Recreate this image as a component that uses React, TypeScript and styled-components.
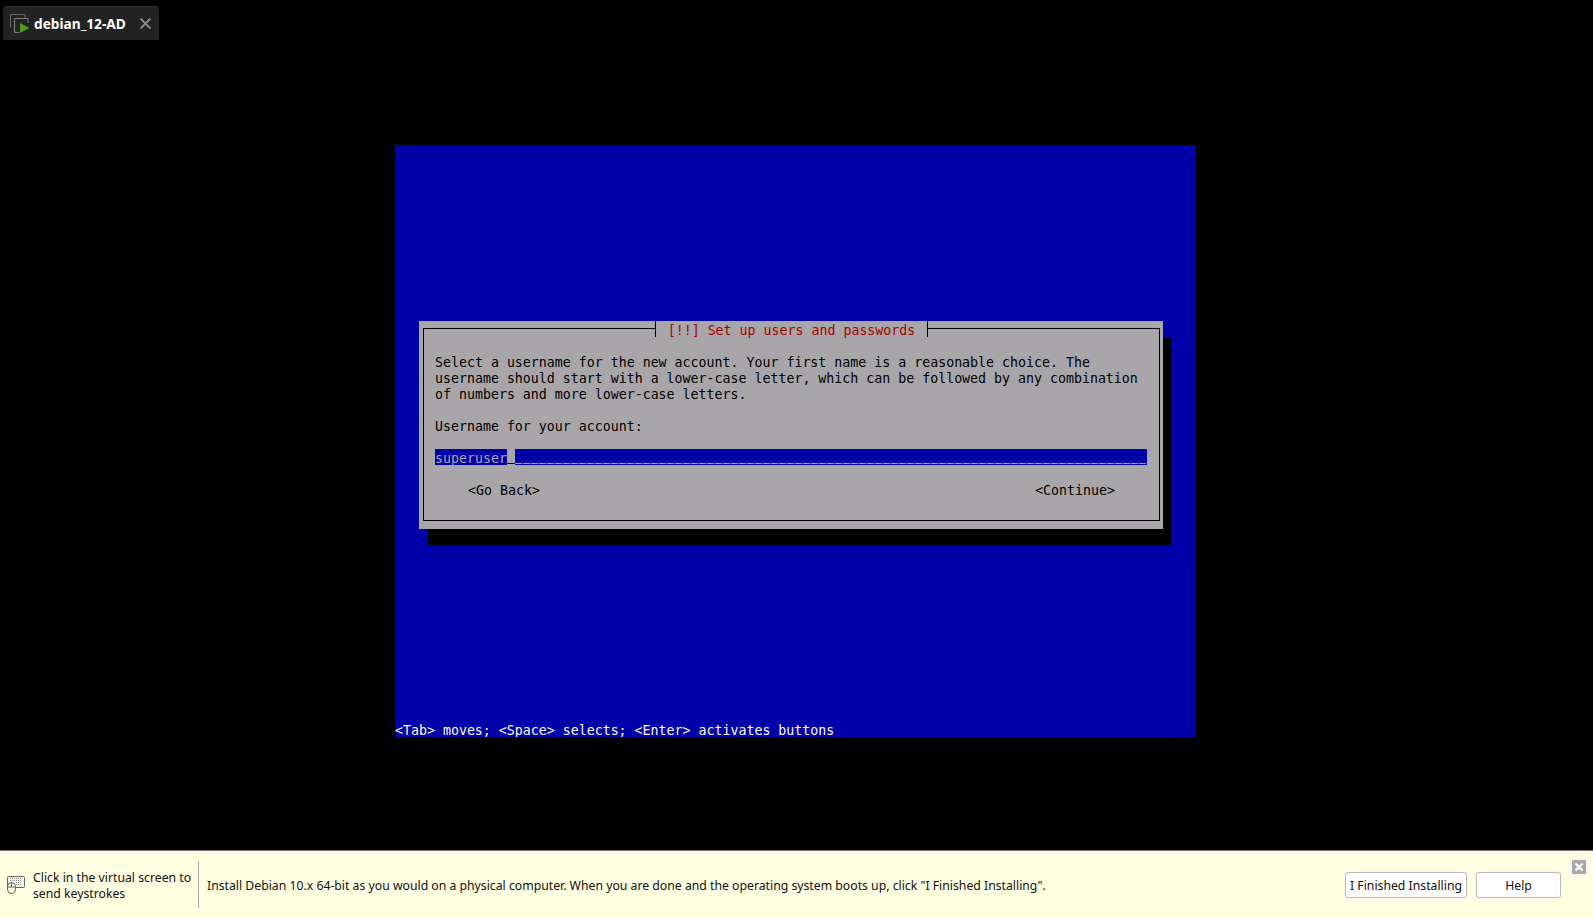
import React from "react";
import styled, { createGlobalStyle } from "styled-components";

const Global = createGlobalStyle`
  html, body { margin: 0; padding: 0; height: 100%; background: #000; overflow: hidden; }
  #root { height: 100%; }
`;

const Page = styled.div`
  width: 1593px;
  height: 918px;
  display: flex;
  flex-direction: column;
  background: #000;
`;

const TabBar = styled.div`
  height: 40px;
  padding: 6px 0 0 3px;
  box-sizing: border-box;
  display: flex;
`;

const Tab = styled.div`
  width: 156px;
  height: 34px;
  box-sizing: border-box;
  background: #222;
  border-radius: 4px 4px 0 0;
  border-top: 1px solid #333;
  display: flex;
  align-items: center;
  padding: 0 0 0 7px;
`;

const TabTitle = styled.span`
  font: bold 13.7px "Noto Sans", "Liberation Sans", Arial, sans-serif;
  color: #fff;
  margin-left: 4px;
  width: 105px;
  white-space: nowrap;
`;

const VmArea = styled.div`
  flex: 1;
  display: flex;
  justify-content: center;
  padding: 105px 3px 0 0;
`;

const Screen = styled.div`
  width: 800px;
  height: 592px;
  background: #0000a8;
  color: #fff;
  font: 13.28px/16px "DejaVu Sans Mono", monospace;
  display: flex;
  flex-direction: column;
  white-space: pre;
  padding-top: 176px;
  box-sizing: border-box;
`;

const Dialog = styled.div`
  position: relative;
  width: 744px;
  height: 208px;
  margin-left: 24px;
  box-sizing: border-box;
  background: #a8a6a8;
  color: #000;
  box-shadow: 8px 16px 0 #000;
  padding: 7px 3px 8px 4px;
`;

const Frame = styled.div`
  height: 100%;
  box-sizing: border-box;
  border: 1px solid #000;
  padding: 26px 11px 0 11px;
  display: flex;
  flex-direction: column;
`;

const DialogTitle = styled.div`
  position: absolute;
  top: 0;
  left: 236px;
  width: 273px;
  height: 16px;
  line-height: 20px;
  box-sizing: border-box;
  background: #a8a6a8;
  border-left: 1px solid #000;
  border-right: 1px solid #000;
  color: #a80000;
  text-align: center;
`;

const Paragraph = styled.div`
  margin-bottom: 16px;
`;

const InputRow = styled.div`
  height: 16px;
  width: 712px;
  display: flex;
  margin: 14px 0 18px;
  line-height: 20px;
`;

const Selected = styled.span`
  background: #0000a8;
  color: #a8a6a8;
  width: 72px;
  height: 16px;
  flex: none;
`;

const Cursor = styled.span`
  width: 8px;
  height: 16px;
  flex: none;
  background: linear-gradient(#000060, #000060) 0 14px / 8px 1px no-repeat;
`;

const Fill = styled.span`
  flex: 1;
  height: 16px;
  background: #0000a8 linear-gradient(90deg, #a8a6a8 7px, transparent 7px) 0 14px / 8px 1px repeat-x;
`;

const Buttons = styled.div`
  display: flex;
  justify-content: space-between;
  padding: 0 33px 0 33px;
`;

const Hint = styled.div`
  margin-top: auto;
  height: 16px;
  line-height: 20px;
  overflow: hidden;
`;

const InfoBar = styled.div`
  height: 68px;
  box-sizing: border-box;
  flex: none;
  background: #ffffe1;
  border-top: 1px solid #777;
  display: flex;
  align-items: center;
  position: relative;
  font: 12.24px "Noto Sans", "Liberation Sans", Arial, sans-serif;
  color: #111;
`;

const KeyHint = styled.div`
  display: flex;
  align-items: center;
  width: 198px;
  padding-left: 7px;
  box-sizing: border-box;
  line-height: 16px;
  gap: 8px;
  flex: none;
`;

const KeyText = styled.span`
  padding-top: 2px;
  white-space: nowrap;
`;

const Divider = styled.div`
  width: 1px;
  height: 47px;
  background: #aaa;
  flex: none;
`;

const Message = styled.div`
  margin-left: 8px;
  padding-top: 2px;
  flex: 1;
`;

const ActionButton = styled.button<{ $w: number }>`
  width: ${(p) => p.$w}px;
  height: 26px;
  box-sizing: border-box;
  padding: 2px 0 0;
  background: #fff;
  border: 1px solid #bbb;
  border-radius: 3px;
  box-shadow: 0 0 0 1px #f8f8ee;
  font: 12.24px "Noto Sans", "Liberation Sans", Arial, sans-serif;
  color: #111;
  margin-right: 9px;
  flex: none;
`;

const Actions = styled.div`
  display: flex;
  padding-right: 23px;
`;

const CloseBox = styled.div`
  position: absolute;
  top: 9px;
  right: 7px;
  width: 14px;
  height: 14px;
  background: #a8a8a8;
  border-radius: 1px;
  box-shadow: 0 0 0 2px #f6f6f0;
  display: flex;
  align-items: center;
  justify-content: center;
`;

const VmIcon = () => (
  <svg width="20" height="19" viewBox="0 0 20 19" style={{ flex: "none" }}>
    <path d="M.5 13.5V.5H15V4" fill="none" stroke="#6a6a6a" />
    <path d="M4.5 18.5V4.5H18V9" fill="none" stroke="#7a7a7a" strokeWidth="1.2" />
    <path d="M4.5 18.5H9" fill="none" stroke="#7a7a7a" strokeWidth="1.2" />
    <path d="M10 9L19.5 14L10 19Z" fill="#4f9a17" />
  </svg>
);

const KeyboardIcon = () => (
  <svg width="18" height="19" viewBox="0 0 18 19" style={{ flex: "none" }}>
    <rect x="0.5" y="1.5" width="17" height="11" rx="1" fill="#f4f4ec" stroke="#5c6660" />
    <path d="M3 3.5h12M3 5.5h12M9 7.5h6M9 9.5h6" stroke="#8a8f88" strokeDasharray="1 1" />
    <rect x="0.5" y="7.5" width="8" height="11" rx="4" fill="#ffffe1" stroke="#5c6660" />
    <path d="M4.5 8v4M1 12h7" stroke="#5c6660" />
  </svg>
);

export default function App() {
  return (
    <Page>
      <Global />
      <TabBar>
        <Tab>
          <VmIcon />
          <TabTitle>debian_12-AD</TabTitle>
          <svg width="13" height="13" viewBox="0 0 13 13" style={{ flex: "none" }}>
            <path d="M1.5 1.5L11.5 11.5M11.5 1.5L1.5 11.5" stroke="#888" strokeWidth="1.8" />
          </svg>
        </Tab>
      </TabBar>
      <VmArea>
        <Screen>
          <Dialog>
            <DialogTitle>[!!] Set up users and passwords</DialogTitle>
            <Frame>
              <Paragraph>
                {"Select a username for the new account. Your first name is a reasonable choice. The\nusername should start with a lower-case letter, which can be followed by any combination\nof numbers and more lower-case letters."}
              </Paragraph>
              <div>Username for your account:</div>
              <InputRow>
                <Selected>superuser</Selected>
                <Cursor />
                <Fill />
              </InputRow>
              <Buttons>
                <span>{"<Go Back>"}</span>
                <span>{"<Continue>"}</span>
              </Buttons>
            </Frame>
          </Dialog>
          <Hint>{"<Tab> moves; <Space> selects; <Enter> activates buttons"}</Hint>
        </Screen>
      </VmArea>
      <InfoBar>
        <KeyHint>
          <KeyboardIcon />
          <KeyText>
            Click in the virtual screen to
            <br />
            send keystrokes
          </KeyText>
        </KeyHint>
        <Divider />
        <Message>
          Install Debian 10.x 64-bit as you would on a physical computer. When you are done and the operating system boots up, click "I Finished Installing".
        </Message>
        <Actions>
          <ActionButton $w={122}>I Finished Installing</ActionButton>
          <ActionButton $w={85}>Help</ActionButton>
        </Actions>
        <CloseBox>
          <svg width="10" height="10" viewBox="0 0 10 10">
            <path d="M1.5 1.5L8.5 8.5M8.5 1.5L1.5 8.5" stroke="#fff" strokeWidth="2.2" />
          </svg>
        </CloseBox>
      </InfoBar>
    </Page>
  );
}
